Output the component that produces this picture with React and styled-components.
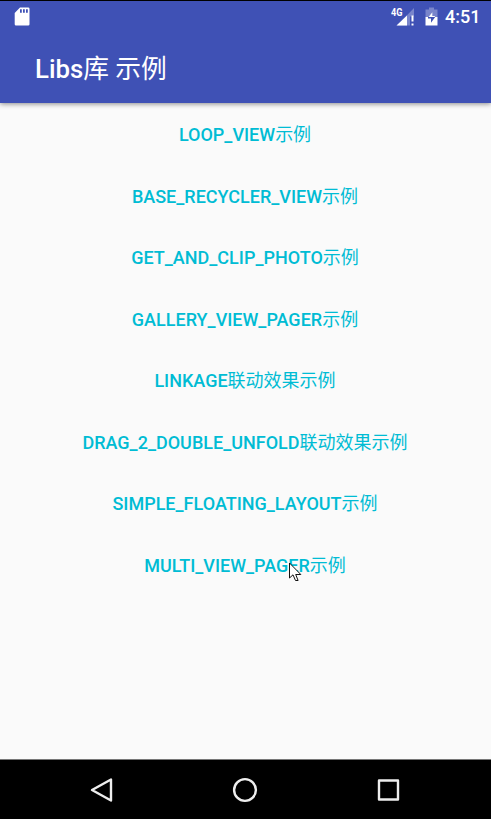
import React from "react";
import styled, { createGlobalStyle } from "styled-components";

const GlobalStyle = createGlobalStyle`
  * { box-sizing: border-box; }
  body { margin: 0; overflow: hidden; }
`;

const Screen = styled.div`
  position: relative;
  width: 491px;
  height: 819px;
  display: flex;
  flex-direction: column;
  background: #fafafa;
  font-family: Roboto, "Noto Sans CJK SC", sans-serif;
  font-weight: 500;
`;

const Header = styled.header`
  height: 103px;
  flex: none;
  border-top: 1px solid #000;
  background: #3f51b5;
  color: #fff;
  box-shadow: 0 1px 5px rgba(0, 0, 0, 0.45);
`;

const StatusBar = styled.div`
  height: 32px;
  display: flex;
  align-items: center;
  padding: 0 10.5px 0 14px;
`;

const StatusIcons = styled.div`
  margin-left: auto;
  display: flex;
  align-items: center;
`;

const Clock = styled.time`
  width: 35px;
  margin-left: 7px;
  font-size: 18px;
  line-height: 32px;
  white-space: nowrap;
  display: flex;
  justify-content: flex-end;
`;

const Title = styled.h1`
  margin: 0;
  padding-left: 35px;
  font-size: 25.75px;
  line-height: 72px;
  font-weight: 500;
  white-space: nowrap;
`;

const Han = styled.span`
  font-weight: 400;
`;

const Menu = styled.main`
  flex: 1;
  display: flex;
  flex-direction: column;
  padding: 1.5px 1px 0 0;
`;

const MenuButton = styled.button`
  height: 61.5px;
  flex: none;
  padding: 0;
  border: 0;
  background: none;
  color: #00bcd4;
  font: inherit;
  font-size: 18px;
  line-height: 26px;
  white-space: nowrap;
`;

const NavBar = styled.nav`
  height: 60px;
  flex: none;
  display: flex;
  justify-content: center;
  align-items: center;
  gap: 113.5px;
  padding-right: 1px;
  border-top: 1px solid #777;
  background: #000;
`;

const NavIcon = styled.svg`
  width: 30px;
  height: 30px;
  fill: none;
  stroke: #eee;
  stroke-width: 2.4;
  stroke-linejoin: round;
  margin-top: 1px;
`;

const Icon = styled.svg`
  display: block;
  flex: none;
`;

const SdIcon = styled(Icon)`
  margin-top: -1px;
`;

const Pointer = styled.svg`
  position: absolute;
  left: 289px;
  top: 562px;
`;

const items = [
  ["LOOP_VIEW", "示例"],
  ["BASE_RECYCLER_VIEW", "示例"],
  ["GET_AND_CLIP_PHOTO", "示例"],
  ["GALLERY_VIEW_PAGER", "示例"],
  ["LINKAGE", "联动效果示例"],
  ["DRAG_2_DOUBLE_UNFOLD", "联动效果示例"],
  ["SIMPLE_FLOATING_LAYOUT", "示例"],
  ["MULTI_VIEW_PAGER", "示例"],
];

function SdCardIcon() {
  return (
    <SdIcon width="16" height="19" viewBox="0 0 16 19">
      <path
        fill="#fff"
        fillRule="evenodd"
        d="M6 .5h8.200q1.300 0 1.300 1.300v15.400q0 1.300-1.300 1.300H2Q.7 18.500 .7 17.200V6ZM6 2.300v3.500h1.800V2.300Zm3 0v3.500h1.800V2.300Zm3 0v3.500h1.800V2.300Z"
      />
    </SdIcon>
  );
}

const NetworkLabel = styled.text`
  font-family: Roboto, sans-serif;
  font-size: 10.5px;
  font-weight: 700;
  fill: #fff;
`;

function SignalIcon() {
  return (
    <Icon width="24" height="22" viewBox="0 0 24 22">
      <path d="M23 2v8.500h-4V19.500H6Z" fill="#fff" opacity=".3" />
      <path d="M16 9.500v10H5.500Z" fill="#fff" />
      <path d="M20.500 9.500h2v6h-2ZM20.500 17.500h2v2h-2Z" fill="#fff" />
      <NetworkLabel x="0" y="10" textLength="11.500" lengthAdjust="spacingAndGlyphs">
        4G
      </NetworkLabel>
    </Icon>
  );
}

const BatterySvg = styled(Icon)`
  margin-left: 9.5px;
`;

function BatteryIcon() {
  return (
    <BatterySvg width="14" height="20" viewBox="0 0 14 20">
      <path d="M4 .5h5v2h3.500V10H.5V2.500H4Z" fill="#fff" opacity=".3" />
      <path d="M.5 10h12v8.500H.5Z" fill="#fff" />
      <path d="M3 10h7.200L6 15.800V11.500H3Z" fill="#3f51b5" />
      <path d="M7.300 5.300V10H3.700Z" fill="#fff" />
      <path d="M7 9h3.200l-.7 1H7Z" fill="#fff" />
    </BatterySvg>
  );
}

export default function App() {
  return (
    <>
      <GlobalStyle />
      <Screen>
        <Header>
          <StatusBar>
            <SdCardIcon />
            <StatusIcons>
              <SignalIcon />
              <BatteryIcon />
              <Clock>4:51</Clock>
            </StatusIcons>
          </StatusBar>
          <Title>
            Libs<Han>库 示例</Han>
          </Title>
        </Header>
        <Menu>
          {items.map(([name, suffix]) => (
            <MenuButton key={name}>
              {name}
              <Han>{suffix}</Han>
            </MenuButton>
          ))}
        </Menu>
        <NavBar>
          <NavIcon viewBox="0 0 30 30" aria-label="Back">
            <path d="M24 4.500v21L5 15Z" />
          </NavIcon>
          <NavIcon viewBox="0 0 30 30" aria-label="Home">
            <circle cx="15" cy="15" r="10.900" />
          </NavIcon>
          <NavIcon viewBox="0 0 30 30" aria-label="Recent apps">
            <rect x="5" y="5.500" width="19" height="19" />
          </NavIcon>
        </NavBar>
        <Pointer width="13" height="21" viewBox="0 0 13 21">
          <path
            d="M.5 1v15l3.500-3.200 2.500 5.700h2.600L6.700 12.500h5.100Z"
            fill="#fff"
            stroke="#111"
            strokeWidth="1"
          />
        </Pointer>
      </Screen>
    </>
  );
}
